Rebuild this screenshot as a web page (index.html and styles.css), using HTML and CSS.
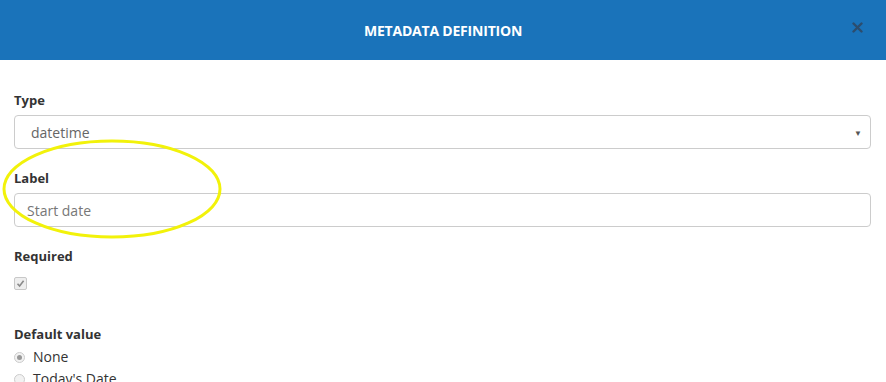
FILE: index.html
```html
<!DOCTYPE html>
<html lang="en">
<head>
  <meta charset="UTF-8">
  <title>Metadata definition</title>
  <link rel="stylesheet" href="styles.css">
</head>
<body>
  <div class="modal">
    <div class="modal-header">
      <h2 class="modal-title">Metadata Definition</h2>
      <span class="close">
        <svg width="11" height="11" viewBox="0 0 11 11"><path d="M1.5 1.5 L9.5 9.5 M9.5 1.5 L1.5 9.5" stroke="#2c4d6e" stroke-width="2.4" stroke-linecap="round"/></svg>
      </span>
    </div>

    <div class="modal-body">
      <div class="form-group">
        <label>Type</label>
        <div class="select">
          <span>datetime</span>
          <span class="caret">▼</span>
        </div>
      </div>

      <div class="form-group">
        <label>Label</label>
        <div class="input">Start date</div>
        <!-- marcado a mano -->
        <svg class="highlight" width="230" height="104" viewBox="0 0 230 104">
          <ellipse cx="112" cy="51" rx="108" ry="48" fill="none" stroke="#f2f20a" stroke-width="3"/>
        </svg>
      </div>

      <div class="form-group">
        <label>Required</label>
        <span class="check">
          <svg width="9" height="9" viewBox="0 0 9 9"><path d="M1.5 4.8 L3.6 7 L7.6 1.8" stroke="#8a8a8a" stroke-width="1.6" fill="none"/></svg>
        </span>
      </div>

      <div class="form-group default">
        <label>Default value</label>
        <div class="radio-row"><span class="radio on"></span>None</div>
        <div class="radio-row"><span class="radio"></span>Today's Date</div>
      </div>
    </div>
  </div>
</body>
</html>
```

FILE: styles.css
```css
body {
  margin: 0;
  font-family: "Open Sans", "Noto Sans", sans-serif;
  background: #fff;
  color: #333;
  overflow: hidden;
}

.modal-header {
  height: 60px;
  background: #1a73ba;
  display: flex;
  align-items: center;
  justify-content: center;
  position: relative;
}

.modal-title {
  margin: 0;
  color: #fff;
  font-size: 14px;
  font-weight: 700;
  text-transform: uppercase;
  letter-spacing: -0.2px;
}

.close {
  position: absolute;
  right: 23px;
  top: 22px;
  line-height: 0;
}

.modal-body {
  padding: 31px 15px 0 14px;
}

.form-group {
  position: relative;
  margin-bottom: 20px;
}

label {
  display: block;
  font-size: 13px;
  font-weight: 700;
  line-height: 18px;
  color: #333;
  margin-bottom: 6px;
}

.select, .input {
  height: 34px;
  box-sizing: border-box;
  border: 1px solid #ccc;
  border-radius: 4px;
  display: flex;
  align-items: center;
  font-size: 14px;
  color: #666;
}

.select {
  padding: 0 8px 0 16px;
  justify-content: space-between;
}

.caret {
  font-size: 8px;
  color: #555;
}

.input {
  padding: 0 12px;
  color: #777;
}

.highlight {
  position: absolute;
  left: -14px;
  top: -31px;
}

.check {
  display: flex;
  align-items: center;
  justify-content: center;
  width: 11px;
  height: 11px;
  border: 1px solid #c8c8c8;
  border-radius: 2px;
  background: #eee;
  margin-top: 12px;
}

.form-group.default {
  padding-top: 15px;
}

.default label {
  margin-bottom: 3px;
}

.radio-row {
  display: flex;
  align-items: center;
  gap: 8px;
  font-size: 14px;
  line-height: 22px;
  color: #333;
}

.radio {
  width: 11px;
  height: 11px;
  box-sizing: border-box;
  border: 1px solid #ccc;
  border-radius: 50%;
  background: #f2f2f2;
  display: flex;
  align-items: center;
  justify-content: center;
}

.radio.on::after {
  content: "";
  width: 5px;
  height: 5px;
  border-radius: 50%;
  background: #999;
}
```
